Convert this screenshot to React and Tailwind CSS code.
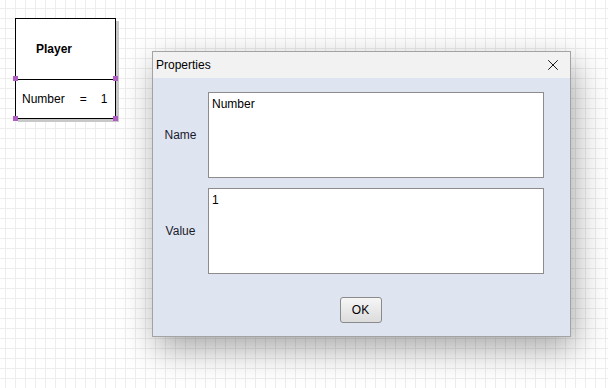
import { X } from 'lucide-react';

const font = "font-['Liberation_Sans',Arial,sans-serif]";

function PlayerNode() {
  return (
    <div className="absolute left-[15px] top-[18px] w-[101px] h-[101px]">
      <div className="absolute left-[3px] top-[3px] w-[101px] h-[101px] bg-[#c8c8c8]" />
      <div className="relative w-full h-full bg-white border border-black flex flex-col">
        <div className="h-[60px] flex items-center pl-[20px] text-[12px] font-bold text-black">Player</div>
        <div className="flex-1 border-t border-black flex items-center pl-[6px] text-[12px] text-black">
          <span>Number</span>
          <span className="ml-[15px]">=</span>
          <span className="ml-[14px]">1</span>
        </div>
      </div>
      <span className="absolute -left-[2px] top-[58px] w-[5px] h-[5px] bg-[#b05cc4]" />
      <span className="absolute -right-[2px] top-[58px] w-[5px] h-[5px] bg-[#b05cc4]" />
      <span className="absolute -left-[2px] -bottom-[2px] w-[5px] h-[5px] bg-[#b05cc4]" />
      <span className="absolute -right-[2px] -bottom-[2px] w-[5px] h-[5px] bg-[#b05cc4]" />
    </div>
  );
}

function Field({ label, value }) {
  return (
    <div className="flex items-center pr-[26px]">
      <div className="w-[55px] text-center text-[12px] text-[#1a1a2e]">{label}</div>
      <div className="flex-1 h-[86px] bg-white border border-[#8c8c8c] px-[3px] py-[3px] text-[12px] text-black leading-[16px]">
        {value}
      </div>
    </div>
  );
}

export default function App() {
  return (
    <div
      className={`${font} relative w-[608px] h-[388px] overflow-hidden bg-white bg-[linear-gradient(to_right,#ededed_1px,transparent_1px),linear-gradient(to_bottom,#ededed_1px,transparent_1px)] bg-[size:10px_10px] bg-[position:5px_8px]`}
    >
      <PlayerNode />

      {/* Properties dialog */}
      <div className="absolute left-[152px] top-[51px] w-[419px] h-[286px] flex flex-col border border-[#a3a3a3] bg-[#dfe5f0] shadow-[4px_12px_32px_rgba(0,0,0,0.35)]">
        <div className="h-[26px] bg-[#f2f2f2] flex items-center justify-between pl-[3px] pr-[8px]">
          <span className="text-[12px] text-black">Properties</span>
          <X size={18} strokeWidth={1.2} className="text-black" />
        </div>
        <div className="flex-1 flex flex-col pt-[14px]">
          <div className="flex flex-col gap-[10px]">
            <Field label="Name" value="Number" />
            <Field label="Value" value="1" />
          </div>
          <div className="flex justify-center mt-[23px] pr-[2px]">
            <button className="w-[42px] h-[26px] rounded-[3px] border border-[#8a8a8a] bg-[linear-gradient(to_bottom,#f6f6f6,#dcdcdc)] text-[12px] text-black">
              OK
            </button>
          </div>
        </div>
      </div>
    </div>
  );
}
